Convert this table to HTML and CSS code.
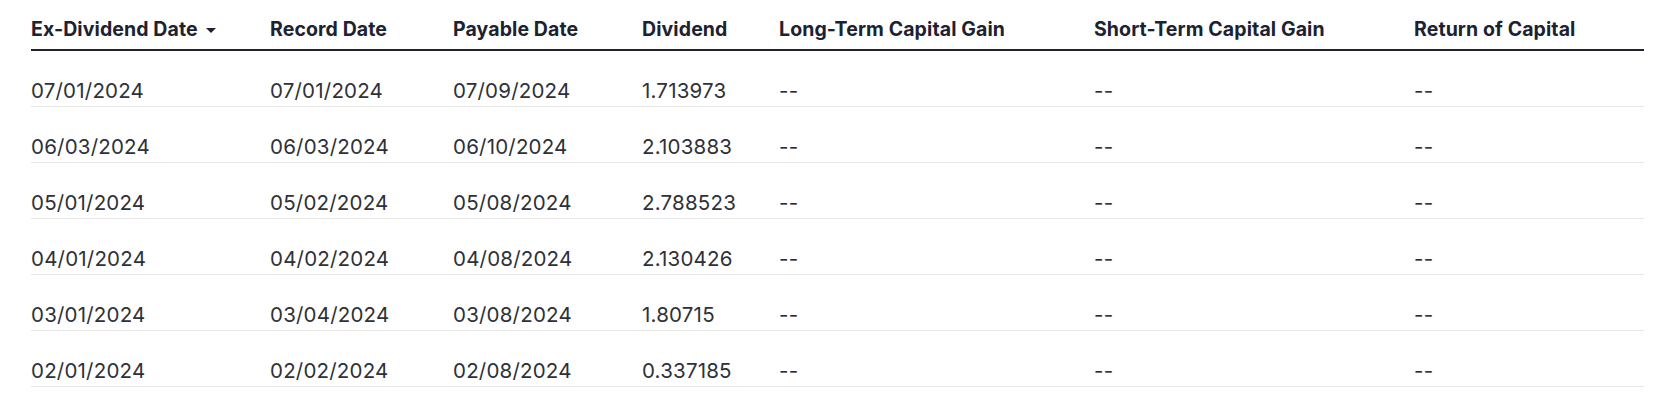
FILE: index.html
```html
<!DOCTYPE html>
<html lang="en">
<head>
<meta charset="utf-8">
<title>Distributions</title>
<link rel="stylesheet" href="styles.css">
</head>
<body>
<div class="wrap">
  <table class="dist">
    <colgroup>
      <col class="c-ex"><col class="c-rec"><col class="c-pay"><col class="c-div"><col class="c-lt"><col class="c-st"><col class="c-roc">
    </colgroup>
    <thead>
      <tr>
        <th>Ex-Dividend Date<svg class="caret" width="10" height="5" viewBox="0 0 10 5"><path d="M0 0H10L5 5Z"/></svg></th>
        <th>Record Date</th>
        <th>Payable Date</th>
        <th>Dividend</th>
        <th>Long-Term Capital Gain</th>
        <th>Short-Term Capital Gain</th>
        <th>Return of Capital</th>
      </tr>
    </thead>
    <tbody>
      <tr><td>07/01/2024</td><td>07/01/2024</td><td>07/09/2024</td><td>1.713973</td><td>--</td><td>--</td><td>--</td></tr>
      <tr><td>06/03/2024</td><td>06/03/2024</td><td>06/10/2024</td><td>2.103883</td><td>--</td><td>--</td><td>--</td></tr>
      <tr><td>05/01/2024</td><td>05/02/2024</td><td>05/08/2024</td><td>2.788523</td><td>--</td><td>--</td><td>--</td></tr>
      <tr><td>04/01/2024</td><td>04/02/2024</td><td>04/08/2024</td><td>2.130426</td><td>--</td><td>--</td><td>--</td></tr>
      <tr><td>03/01/2024</td><td>03/04/2024</td><td>03/08/2024</td><td>1.80715</td><td>--</td><td>--</td><td>--</td></tr>
      <tr><td>02/01/2024</td><td>02/02/2024</td><td>02/08/2024</td><td>0.337185</td><td>--</td><td>--</td><td>--</td></tr>
    </tbody>
  </table>
</div>
</body>
</html>
```
FILE: styles.css
```css
html, body {
  margin: 0;
  padding: 0;
  background: #ffffff;
}

.wrap {
  padding: 0 34px 0 31px;
}

.dist {
  width: 1613px;
  border-collapse: separate;
  border-spacing: 0;
  table-layout: fixed;
}

.c-ex { width: 239px; }
.c-rec { width: 183px; }
.c-pay { width: 189px; }
.c-div { width: 137px; }
.c-lt { width: 315px; }
.c-st { width: 320px; }
.c-roc { width: 230px; }

.dist th {
  font-family: Inter, "Liberation Sans", sans-serif;
  font-weight: 700;
  font-size: 19.5px;
  line-height: 24px;
  color: #1d2230;
  text-align: left;
  padding: 17px 0 8px;
  border-bottom: 2px solid #1e222b;
  white-space: nowrap;
  letter-spacing: 0.1px;
}

.caret {
  display: inline-block;
  margin-left: 8px;
  vertical-align: 3px;
  fill: #1d2230;
}

.dist td {
  font-family: Inter, "Liberation Sans", sans-serif;
  font-weight: 400;
  font-size: 20.5px;
  line-height: 24px;
  color: #2e3138;
  padding: 28px 0 3px;
  border-bottom: 1px solid #e6e6e6;
  white-space: nowrap;
  letter-spacing: 0.2px;
}
```
